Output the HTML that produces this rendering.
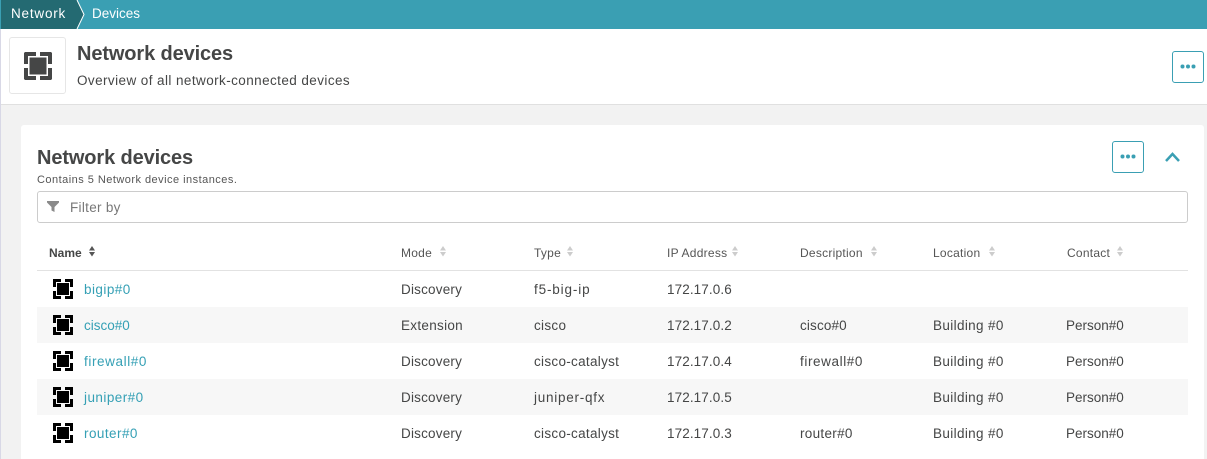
<!DOCTYPE html>
<html><head><meta charset="utf-8"><style>
html,body{margin:0;padding:0}
body{width:1207px;height:459px;position:relative;overflow:hidden;background:#f2f2f2;font-family:"Liberation Sans",sans-serif;color:#454646;font-size:13.5px}
div{position:absolute;white-space:nowrap}
.h{font-size:12px;color:#555;top:246px;line-height:14px;letter-spacing:.25px}
.c{line-height:16px;letter-spacing:.3px}
.l{color:#35a0b5;left:84px;letter-spacing:.45px}
.b{letter-spacing:.36px}
.p{letter-spacing:0}
.i{letter-spacing:.1px}
.d{letter-spacing:.2px}
svg{position:absolute}
</style></head><body>
<div style="left:0;top:0;width:1207px;height:29px;background:#3a9fb3"></div>
<svg style="left:0;top:0" width="90" height="29"><path d="M1 0H77L84 14.5L77 29H1Z" fill="#246a72"/><path d="M77 0L84 14.5L77 29" fill="none" stroke="#fff" stroke-width="1"/></svg>
<div class="c" style="left:11px;top:6px;color:#fff;font-size:13.5px;letter-spacing:.8px">Network</div>
<div class="c" style="left:92px;top:6px;color:#fff;font-size:13.5px;letter-spacing:0">Devices</div>
<div style="left:1px;top:29px;width:1206px;height:75px;background:#fff;border-bottom:1px solid #e0e0e0"></div>
<div style="left:0;top:29px;width:1px;height:430px;background:#d8d8e6"></div>
<div style="left:9px;top:37px;width:55px;height:55px;border:1px solid #e6e6e6;border-radius:3px;background:#fff"></div>
<svg style="left:24px;top:52px" width="28" height="28" viewBox="0 0 28 28"><path d="M1 0H12V4H4V12H0V1ZM16 0H27L28 1V12H24V4H16ZM0 16H4V24H12V28H1L0 27ZM28 16V27L27 28H16V24H24V16Z" fill="#454646"/><rect x="5.500" y="5.500" width="17" height="17" fill="#454646"/></svg>
<div style="left:77px;top:42px;font-size:20px;font-weight:700;line-height:24px;color:#454646;letter-spacing:-.12px">Network devices</div>
<div class="c" style="left:77px;top:73px;letter-spacing:.42px">Overview of all network-connected devices</div>
<div style="left:1172px;top:51px;width:30px;height:30px;border:1px solid #3a9fb3;border-radius:3px;background:#fff"></div>
<svg style="left:1180px;top:64px" width="16" height="5"><circle cx="2.500" cy="2.500" r="2" fill="#3a9fb3"/><circle cx="8" cy="2.500" r="2" fill="#3a9fb3"/><circle cx="13.500" cy="2.500" r="2" fill="#3a9fb3"/></svg>
<div style="left:21px;top:125px;width:1183px;height:334px;background:#fff;border-radius:3px 3px 0 0"></div>
<div style="left:37px;top:146px;font-size:20px;font-weight:700;line-height:24px;color:#454646;letter-spacing:-.12px">Network devices</div>
<div style="left:37px;top:173px;font-size:11px;line-height:14px;color:#555;letter-spacing:.47px">Contains 5 Network device instances.</div>
<div style="left:1112px;top:141px;width:30px;height:30px;border:1px solid #3a9fb3;border-radius:3px;background:#fff"></div>
<svg style="left:1120px;top:154px" width="16" height="5"><circle cx="2.500" cy="2.500" r="2" fill="#3a9fb3"/><circle cx="8" cy="2.500" r="2" fill="#3a9fb3"/><circle cx="13.500" cy="2.500" r="2" fill="#3a9fb3"/></svg>
<svg style="left:1164px;top:150px" width="18" height="13"><path d="M2 11L8.500 4L15 11" fill="none" stroke="#3a9fb3" stroke-width="2.500"/></svg>
<div style="left:37px;top:191px;width:1149px;height:30px;border:1px solid #ccc;border-radius:3px;background:#fff"></div>
<svg style="left:47px;top:201px" width="13" height="12"><path d="M0 0H12V1.500L7.500 6V11L4.500 9.500V6L0 1.500Z" fill="#8a8a8a"/></svg>
<div class="c" style="left:70px;top:200px;color:#777;font-size:13.5px">Filter by</div>
<div class="h" style="left:49px;font-weight:700;color:#454646;letter-spacing:0">Name</div>
<svg style="left:88px;top:246px" width="8" height="12"><path d="M4 0L7 4.500H1ZM4 10.500L1 6H7Z" fill="#555"/></svg>
<div class="h" style="left:401px">Mode</div>
<svg style="left:439px;top:246px" width="8" height="12"><path d="M4 0L7 4.500H1ZM4 10.500L1 6H7Z" fill="#ccc"/></svg>
<div class="h" style="left:534px">Type</div>
<svg style="left:566px;top:246px" width="8" height="12"><path d="M4 0L7 4.500H1ZM4 10.500L1 6H7Z" fill="#ccc"/></svg>
<div class="h" style="left:667px">IP Address</div>
<svg style="left:731px;top:246px" width="8" height="12"><path d="M4 0L7 4.500H1ZM4 10.500L1 6H7Z" fill="#ccc"/></svg>
<div class="h" style="left:800px">Description</div>
<svg style="left:870px;top:246px" width="8" height="12"><path d="M4 0L7 4.500H1ZM4 10.500L1 6H7Z" fill="#ccc"/></svg>
<div class="h" style="left:933px">Location</div>
<svg style="left:988px;top:246px" width="8" height="12"><path d="M4 0L7 4.500H1ZM4 10.500L1 6H7Z" fill="#ccc"/></svg>
<div class="h" style="left:1067px">Contact</div>
<svg style="left:1116px;top:246px" width="8" height="12"><path d="M4 0L7 4.500H1ZM4 10.500L1 6H7Z" fill="#ccc"/></svg>
<div style="left:37px;top:270px;width:1151px;height:1px;background:#e2e2e2"></div>
<div style="left:37px;top:307px;width:1151px;height:36px;background:#f7f7f7"></div>
<div style="left:37px;top:379px;width:1151px;height:36px;background:#f7f7f7"></div>

<svg style="left:53px;top:279px" width="20" height="20" viewBox="0 0 20 20"><path d="M0 0H8V3H3V8H0ZM12 0H20V8H17V3H12ZM0 12H3V17H8V20H0ZM20 12V20H12V17H17V12Z" fill="#000"/><rect x="4" y="4" width="12" height="12" fill="#000"/></svg>
<svg style="left:53px;top:315px" width="20" height="20" viewBox="0 0 20 20"><path d="M0 0H8V3H3V8H0ZM12 0H20V8H17V3H12ZM0 12H3V17H8V20H0ZM20 12V20H12V17H17V12Z" fill="#000"/><rect x="4" y="4" width="12" height="12" fill="#000"/></svg>
<svg style="left:53px;top:351px" width="20" height="20" viewBox="0 0 20 20"><path d="M0 0H8V3H3V8H0ZM12 0H20V8H17V3H12ZM0 12H3V17H8V20H0ZM20 12V20H12V17H17V12Z" fill="#000"/><rect x="4" y="4" width="12" height="12" fill="#000"/></svg>
<svg style="left:53px;top:387px" width="20" height="20" viewBox="0 0 20 20"><path d="M0 0H8V3H3V8H0ZM12 0H20V8H17V3H12ZM0 12H3V17H8V20H0ZM20 12V20H12V17H17V12Z" fill="#000"/><rect x="4" y="4" width="12" height="12" fill="#000"/></svg>
<svg style="left:53px;top:423px" width="20" height="20" viewBox="0 0 20 20"><path d="M0 0H8V3H3V8H0ZM12 0H20V8H17V3H12ZM0 12H3V17H8V20H0ZM20 12V20H12V17H17V12Z" fill="#000"/><rect x="4" y="4" width="12" height="12" fill="#000"/></svg>

<div class="c l" style="top:282px">bigip#0</div><div class="c d" style="left:401px;top:282px">Discovery</div><div class="c" style="left:534px;top:282px;letter-spacing:.85px">f5-big-ip</div><div class="c i" style="left:667px;top:282px">172.17.0.6</div>
<div class="c l" style="top:318px;letter-spacing:0">cisco#0</div><div class="c d" style="left:401px;top:318px;letter-spacing:.3px">Extension</div><div class="c" style="left:534px;top:318px">cisco</div><div class="c i" style="left:667px;top:318px">172.17.0.2</div><div class="c" style="left:800px;top:318px;letter-spacing:.15px">cisco#0</div><div class="c b" style="left:933px;top:318px">Building #0</div><div class="c p" style="left:1066px;top:318px">Person#0</div>
<div class="c l" style="top:354px;letter-spacing:.6px">firewall#0</div><div class="c d" style="left:401px;top:354px">Discovery</div><div class="c" style="left:534px;top:354px">cisco-catalyst</div><div class="c i" style="left:667px;top:354px">172.17.0.4</div><div class="c" style="left:800px;top:354px;letter-spacing:.6px">firewall#0</div><div class="c b" style="left:933px;top:354px">Building #0</div><div class="c p" style="left:1066px;top:354px">Person#0</div>
<div class="c l" style="top:390px">juniper#0</div><div class="c d" style="left:401px;top:390px">Discovery</div><div class="c" style="left:534px;top:390px;letter-spacing:.75px">juniper-qfx</div><div class="c i" style="left:667px;top:390px">172.17.0.5</div><div class="c b" style="left:933px;top:390px">Building #0</div><div class="c p" style="left:1066px;top:390px">Person#0</div>
<div class="c l" style="top:426px">router#0</div><div class="c d" style="left:401px;top:426px">Discovery</div><div class="c" style="left:534px;top:426px">cisco-catalyst</div><div class="c i" style="left:667px;top:426px">172.17.0.3</div><div class="c" style="left:800px;top:426px">router#0</div><div class="c b" style="left:933px;top:426px">Building #0</div><div class="c p" style="left:1066px;top:426px">Person#0</div>
</body></html>
